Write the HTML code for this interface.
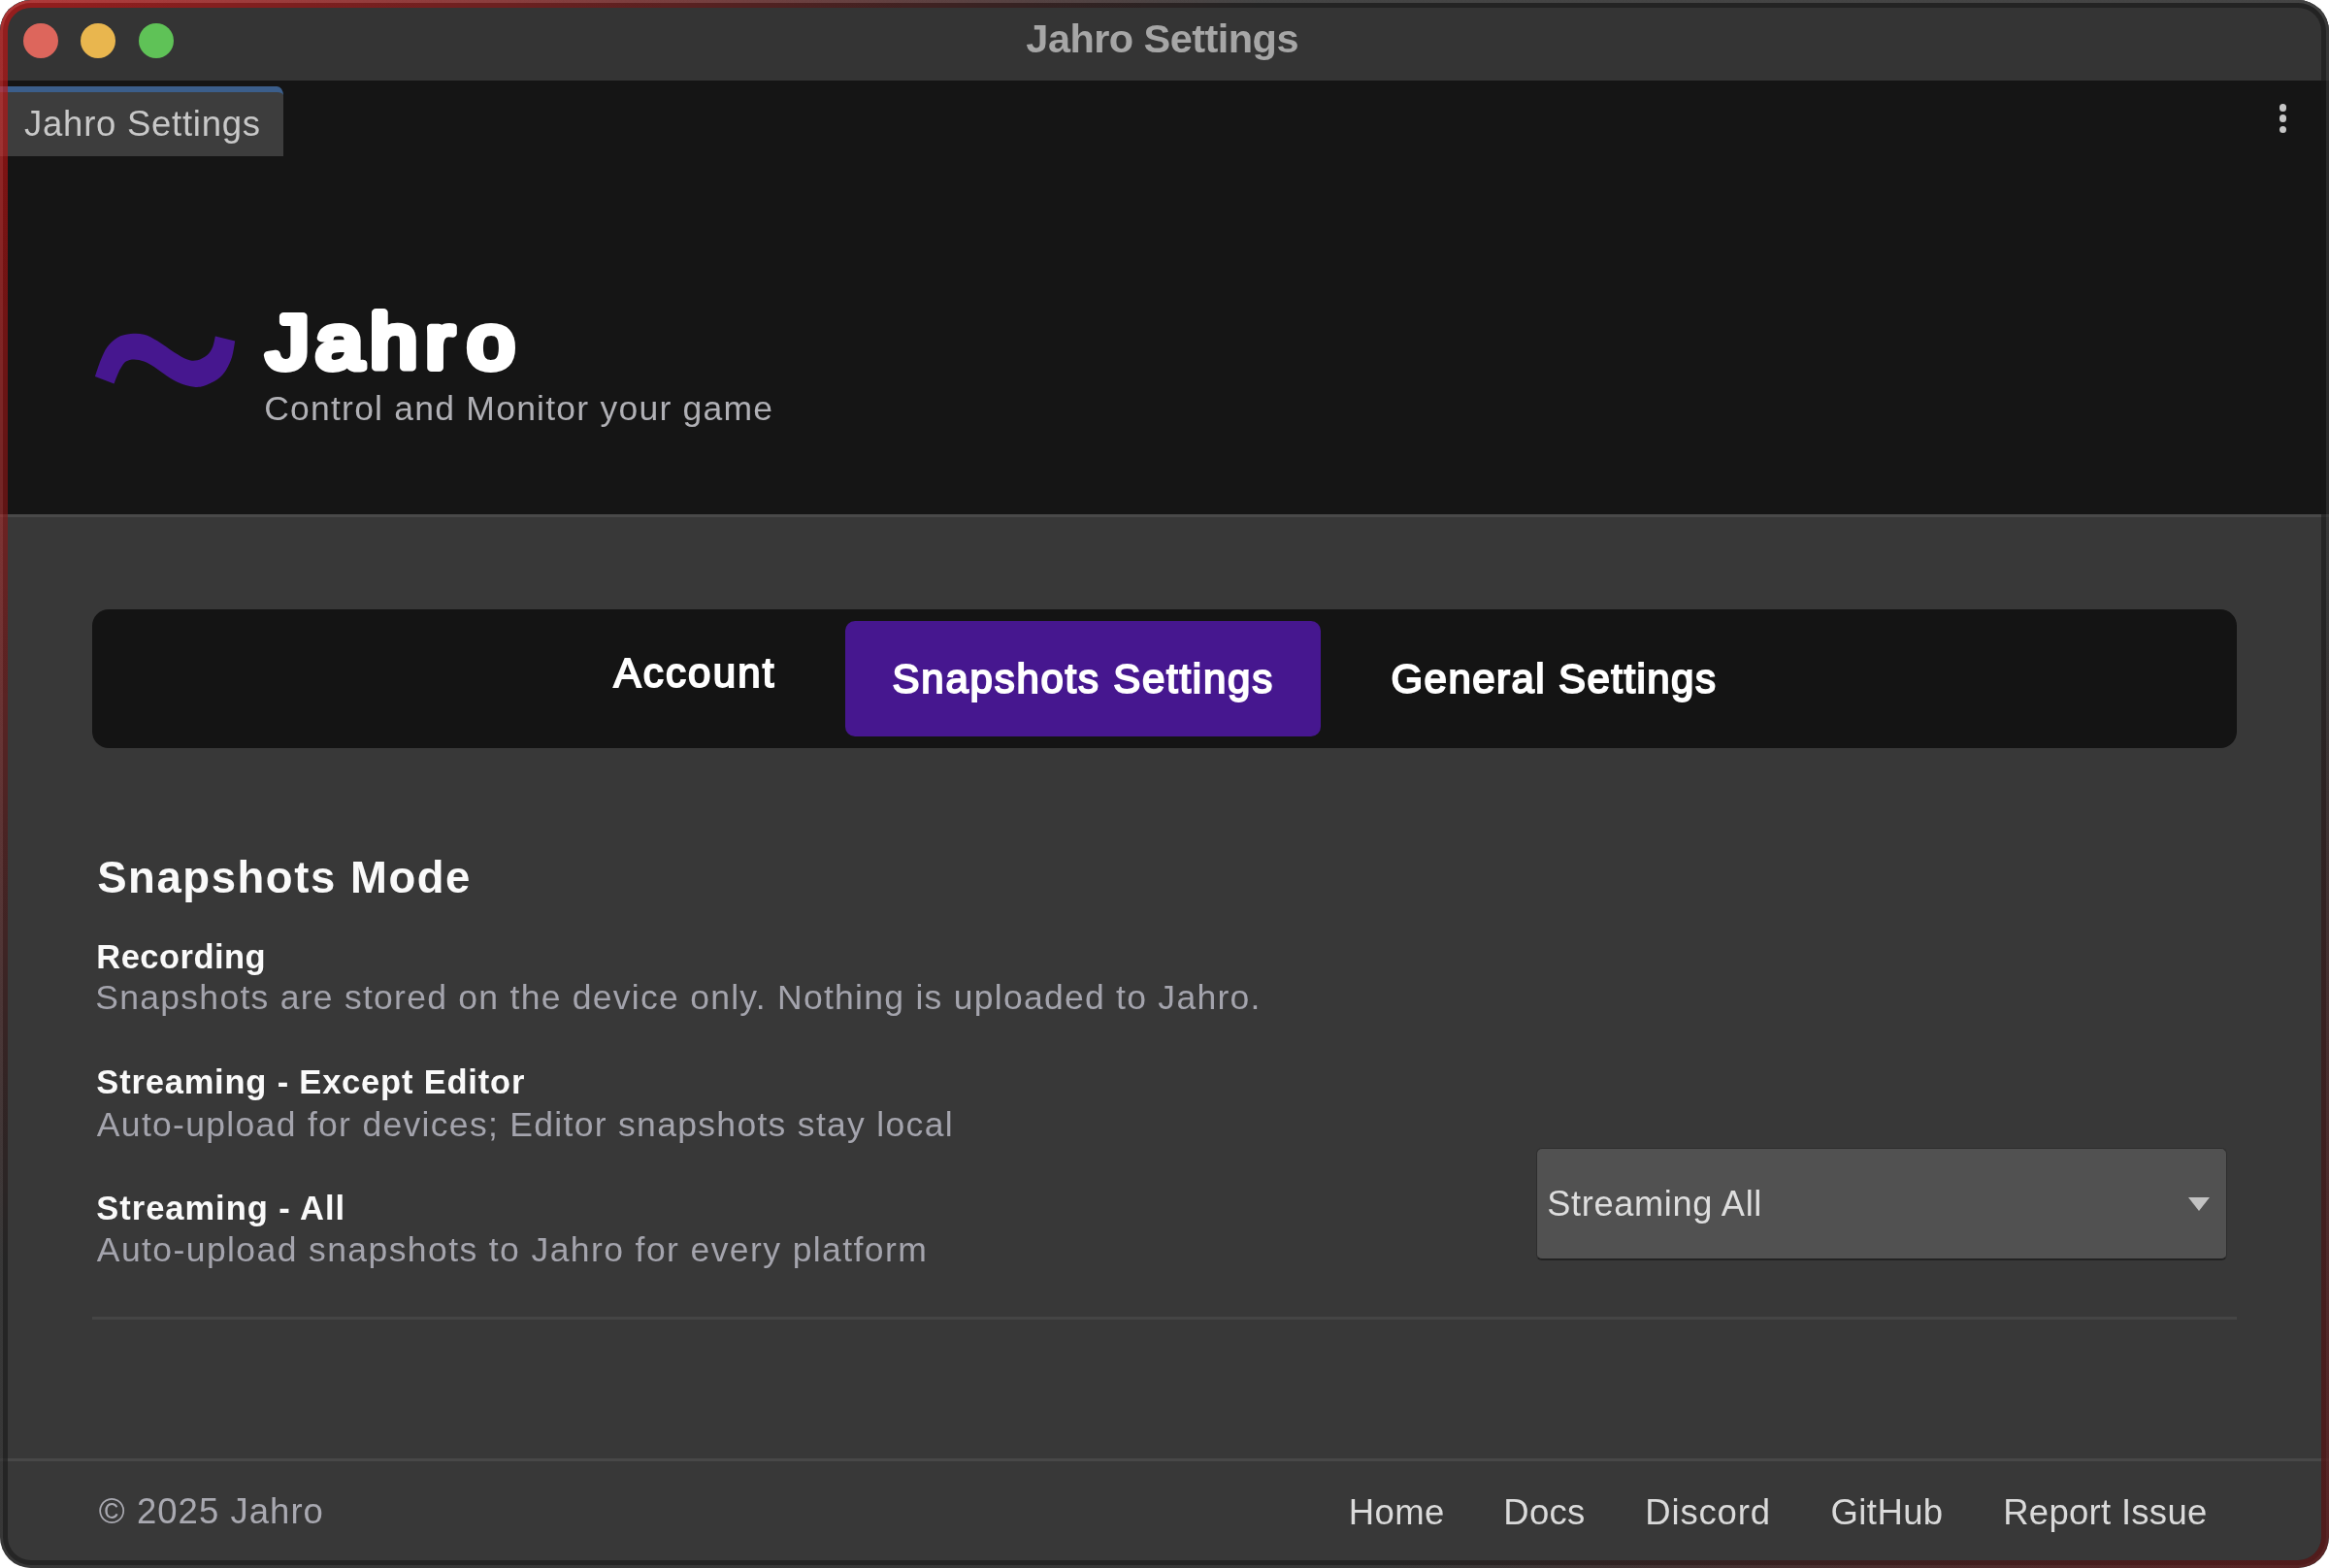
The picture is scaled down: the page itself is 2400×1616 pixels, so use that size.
<!DOCTYPE html>
<html lang="en">
<head>
<meta charset="utf-8">
<title>Jahro Settings</title>
<style>
html,body{margin:0;padding:0;background:#ffffff;}
body{width:2400px;height:1616px;overflow:hidden;position:relative;font-family:"Liberation Sans",sans-serif;}
.win{position:absolute;left:0;top:0;width:2400px;height:1616px;border-radius:32px;overflow:hidden;background:#383838;}
.abs{position:absolute;}
.t{position:absolute;display:block;white-space:nowrap;line-height:1;margin:0;padding:0;}
.titlebar{left:0;top:0;width:2400px;height:83.4px;background:#343434;}
.header{left:0;top:83px;width:2400px;height:447px;background:#151515;}
.sep{left:0;top:530px;width:2400px;height:3px;background:#494949;}
.light{width:36px;height:36px;border-radius:50%;top:24px;}
.tab{left:0;top:89.2px;width:292px;height:71.6px;box-sizing:border-box;background:#3d3d3d;border-top:6.6px solid #3b5e8b;border-top-right-radius:6.5px 9.5px;}
.dot{width:7.8px;height:7.8px;border-radius:50%;background:#c6c6c6;left:2348.5px;}
.nav{left:95px;top:628px;width:2210px;height:143px;border-radius:17px;background:#141414;}
.active{left:871px;top:640px;width:490px;height:119px;border-radius:10px;background:#46178f;}
.div1{left:95px;top:1357px;width:2210px;height:3px;background:#454545;}
.div2{left:0;top:1503px;width:2400px;height:3px;background:#484848;}
.select{left:1582.5px;top:1182.5px;width:712px;height:116.5px;box-sizing:border-box;border:1.5px solid #2d2d2d;border-bottom:2px solid #222;border-radius:6px;background:#515151;}
.arrow{left:2255px;top:1233.5px;width:0;height:0;border-left:11px solid transparent;border-right:11px solid transparent;border-top:14px solid #c2c2c2;}
svg.ov{position:absolute;left:0;top:0;width:2400px;height:1616px;pointer-events:none;}
</style>
</head>
<body>
<div class="win">
  <header>
    <div class="abs header"></div>
    <div class="abs titlebar"></div>
    <div class="abs light" style="left:24px;background:#dd665c"></div>
    <div class="abs light" style="left:83px;background:#e9b64e"></div>
    <div class="abs light" style="left:142.5px;background:#5fc257"></div>
    <div class="t" id="title" style="left:1057.35px;top:18.87px;font-size:41.5px;font-weight:bold;color:#a6a6a6;letter-spacing:-0.548px;">Jahro Settings</div>
  </header>
  <section class="dock">
    <div class="abs tab"></div>
    <span class="t" id="tablbl" style="left:25.10px;top:110.00px;font-size:36.5px;font-weight:normal;color:#c8c8c8;letter-spacing:0.732px;">Jahro Settings</span>
    <div class="abs dot" style="top:107.1px"></div>
    <div class="abs dot" style="top:118.2px"></div>
    <div class="abs dot" style="top:129.5px"></div>
  </section>
  <section class="brand">
    <svg class="ov" viewBox="0 0 2400 1616" aria-hidden="true">
      <path d="M97.9 388.1C98.9 385.2 101.6 376.3 103.7 371.2C105.9 366.1 107.7 361.4 110.6 357.5C113.5 353.6 116.9 350.1 120.9 347.9C124.9 345.6 130.1 344.6 134.7 344.1C139.2 343.6 143.8 343.6 148.4 344.8C153.0 346.0 157.0 348.3 162.1 351.3C167.3 354.3 174.2 359.8 179.3 363.0C184.5 366.2 189.0 369.2 193.1 370.5C197.1 371.9 199.9 372.0 203.4 371.2C206.8 370.4 211.0 368.0 213.7 365.7C216.3 363.4 217.8 360.7 219.2 357.5C220.5 354.3 221.4 348.3 221.9 346.5L242.2 351.6C241.7 354.3 240.6 362.8 239.1 367.8C237.5 372.8 235.4 377.6 232.9 381.5C230.4 385.4 227.7 388.5 224.0 391.1C220.2 393.8 214.2 396.4 210.2 397.7C206.2 398.9 203.9 399.1 199.9 398.7C195.9 398.3 190.8 397.1 186.2 395.3C181.6 393.4 177.0 390.6 172.4 387.7C167.9 384.8 162.7 380.6 158.7 378.1C154.7 375.6 151.8 373.9 148.4 372.6C145.0 371.3 141.2 370.5 138.1 370.5C135.0 370.5 132.1 371.1 129.8 372.6C127.6 374.1 126.0 376.8 124.4 379.5C122.7 382.1 121.4 385.7 120.2 388.4C119.1 391.1 117.9 394.4 117.5 395.6Z" fill="#46178f"/>
      <g transform="translate(0,378.8) scale(1.13,1)"><text id="logo" x="243.39 287.96 337.68 388.36 426.44" y="0" font-family="Liberation Sans, sans-serif" font-weight="normal" font-size="77" fill="#ffffff" stroke="#ffffff" stroke-width="8" stroke-linejoin="round">Jahro</text></g>
    </svg>
    <div class="t" id="sub" style="left:272.17px;top:403.85px;font-size:35.5px;font-weight:normal;color:#b0b0b5;letter-spacing:1.234px;">Control and Monitor your game</div>
    <div class="abs sep"></div>
  </section>
  <nav>
    <div class="abs nav"></div>
    <div class="abs active"></div>
    <span class="t" id="nav1" style="left:632.48px;top:672.85px;font-size:42px;font-weight:normal;color:#ffffff;letter-spacing:2.198px;-webkit-text-stroke:1.9px #fff;">Account</span>
    <span class="t" id="nav2" style="left:919.62px;top:678.75px;font-size:42px;font-weight:normal;color:#ffffff;letter-spacing:1.743px;-webkit-text-stroke:1.9px #fff;">Snapshots Settings</span>
    <span class="t" id="nav3" style="left:1433.51px;top:678.95px;font-size:42px;font-weight:normal;color:#ffffff;letter-spacing:1.437px;-webkit-text-stroke:1.9px #fff;">General Settings</span>
  </nav>
  <main>
    <h2 class="t" id="h1" style="left:100.20px;top:882.48px;font-size:45.5px;font-weight:bold;color:#fafafa;letter-spacing:1.552px;">Snapshots Mode</h2>
    <h3 class="t" id="r1" style="left:99.32px;top:969.02px;font-size:34.5px;font-weight:bold;color:#fafafa;letter-spacing:0.473px;">Recording</h3>
    <p class="t" id="d1" style="left:98.36px;top:1011.05px;font-size:35.5px;font-weight:normal;color:#a4a4ad;letter-spacing:1.270px;">Snapshots are stored on the device only. Nothing is uploaded to Jahro.</p>
    <h3 class="t" id="r2" style="left:99.32px;top:1098.32px;font-size:34.5px;font-weight:bold;color:#fafafa;letter-spacing:0.803px;">Streaming - Except Editor</h3>
    <p class="t" id="d2" style="left:99.87px;top:1141.65px;font-size:35.5px;font-weight:normal;color:#a4a4ad;letter-spacing:1.309px;">Auto-upload for devices; Editor snapshots stay local</p>
    <h3 class="t" id="r3" style="left:99.32px;top:1228.42px;font-size:34.5px;font-weight:bold;color:#fafafa;letter-spacing:0.970px;">Streaming - All</h3>
    <p class="t" id="d3" style="left:99.87px;top:1271.25px;font-size:35.5px;font-weight:normal;color:#a4a4ad;letter-spacing:1.407px;">Auto-upload snapshots to Jahro for every platform</p>
    <div class="abs select"></div>
    <span class="t" id="dd" style="left:1594.18px;top:1223.16px;font-size:36.2px;font-weight:normal;color:#dedede;letter-spacing:0.668px;">Streaming All</span>
    <div class="abs arrow"></div>
    <div class="abs div1"></div>
  </main>
  <footer>
    <div class="abs div2"></div>
    <span class="t" id="f0" style="left:101.77px;top:1540.10px;font-size:36.5px;font-weight:normal;color:#a9a9b1;letter-spacing:1.039px;">© 2025 Jahro</span>
    <span class="t" id="f1" style="left:1389.79px;top:1540.50px;font-size:36.5px;font-weight:normal;color:#dadada;letter-spacing:0.393px;">Home</span>
    <span class="t" id="f2" style="left:1549.36px;top:1540.50px;font-size:36.5px;font-weight:normal;color:#dadada;letter-spacing:0.230px;">Docs</span>
    <span class="t" id="f3" style="left:1695.36px;top:1540.50px;font-size:36.5px;font-weight:normal;color:#dadada;letter-spacing:0.817px;">Discord</span>
    <span class="t" id="f4" style="left:1886.56px;top:1540.50px;font-size:36.5px;font-weight:normal;color:#dadada;letter-spacing:0.399px;">GitHub</span>
    <span class="t" id="f5" style="left:2064.15px;top:1540.50px;font-size:36.5px;font-weight:normal;color:#dadada;letter-spacing:0.293px;">Report Issue</span>
  </footer>
  <svg class="ov" viewBox="0 0 2400 1616" aria-hidden="true">
    <defs>
      <radialGradient id="gtl" gradientUnits="userSpaceOnUse" cx="0" cy="0" r="1300">
        <stop offset="0" stop-color="#ff0000" stop-opacity="0.47"/>
        <stop offset="0.385" stop-color="#ff0000" stop-opacity="0.306"/>
        <stop offset="0.77" stop-color="#ff0000" stop-opacity="0.094"/>
        <stop offset="1" stop-color="#ff0000" stop-opacity="0"/>
      </radialGradient>
      <radialGradient id="gtd" gradientUnits="userSpaceOnUse" cx="0" cy="0" r="1300">
        <stop offset="0" stop-color="#000000" stop-opacity="0.15"/>
        <stop offset="1" stop-color="#000000" stop-opacity="0"/>
      </radialGradient>
      <radialGradient id="gbr" gradientUnits="userSpaceOnUse" cx="2400" cy="1616" r="980">
        <stop offset="0" stop-color="rgb(118,20,20)" stop-opacity="0.55"/>
        <stop offset="1" stop-color="rgb(118,20,20)" stop-opacity="0"/>
      </radialGradient>
      <linearGradient id="gtop" x1="0" y1="0" x2="0" y2="1">
        <stop offset="0" stop-color="rgb(75,75,75)" stop-opacity="0.7"/>
        <stop offset="0.02" stop-color="rgb(55,55,55)" stop-opacity="0.62"/>
        <stop offset="1" stop-color="rgb(55,55,55)" stop-opacity="0.62"/>
      </linearGradient>
    </defs>
    <path id="ro" fill-rule="evenodd" fill="url(#gtop)" d="M32 0H2368A32 32 0 0 1 2400 32V1584A32 32 0 0 1 2368 1616H32A32 32 0 0 1 0 1584V32A32 32 0 0 1 32 0ZM32 3A29 29 0 0 0 3 32V1584A29 29 0 0 0 32 1613H2368A29 29 0 0 0 2397 1584V32A29 29 0 0 0 2368 3Z"/>
    <path id="ri" fill-rule="evenodd" fill="rgba(23,23,23,0.59)" d="M32 3H2368A29 29 0 0 1 2397 32V1584A29 29 0 0 1 2368 1613H32A29 29 0 0 1 3 1584V32A29 29 0 0 1 32 3ZM32 8A24 24 0 0 0 8 32V1584A24 24 0 0 0 32 1608H2368A24 24 0 0 0 2392 1584V32A24 24 0 0 0 2368 8Z"/>
    <path fill-rule="evenodd" fill="url(#gbr)" d="M32 0H2368A32 32 0 0 1 2400 32V1584A32 32 0 0 1 2368 1616H32A32 32 0 0 1 0 1584V32A32 32 0 0 1 32 0ZM32 8A24 24 0 0 0 8 32V1584A24 24 0 0 0 32 1608H2368A24 24 0 0 0 2392 1584V32A24 24 0 0 0 2368 8Z"/>
    <path fill-rule="evenodd" fill="url(#gtd)" d="M32 0H2368A32 32 0 0 1 2400 32V1584A32 32 0 0 1 2368 1616H32A32 32 0 0 1 0 1584V32A32 32 0 0 1 32 0ZM32 8A24 24 0 0 0 8 32V1584A24 24 0 0 0 32 1608H2368A24 24 0 0 0 2392 1584V32A24 24 0 0 0 2368 8Z"/>
    <path style="mix-blend-mode:plus-lighter" fill-rule="evenodd" fill="url(#gtl)" d="M32 0H2368A32 32 0 0 1 2400 32V1584A32 32 0 0 1 2368 1616H32A32 32 0 0 1 0 1584V32A32 32 0 0 1 32 0ZM32 8A24 24 0 0 0 8 32V1584A24 24 0 0 0 32 1608H2368A24 24 0 0 0 2392 1584V32A24 24 0 0 0 2368 8Z"/>
  </svg>
</div>
</body>
</html>
